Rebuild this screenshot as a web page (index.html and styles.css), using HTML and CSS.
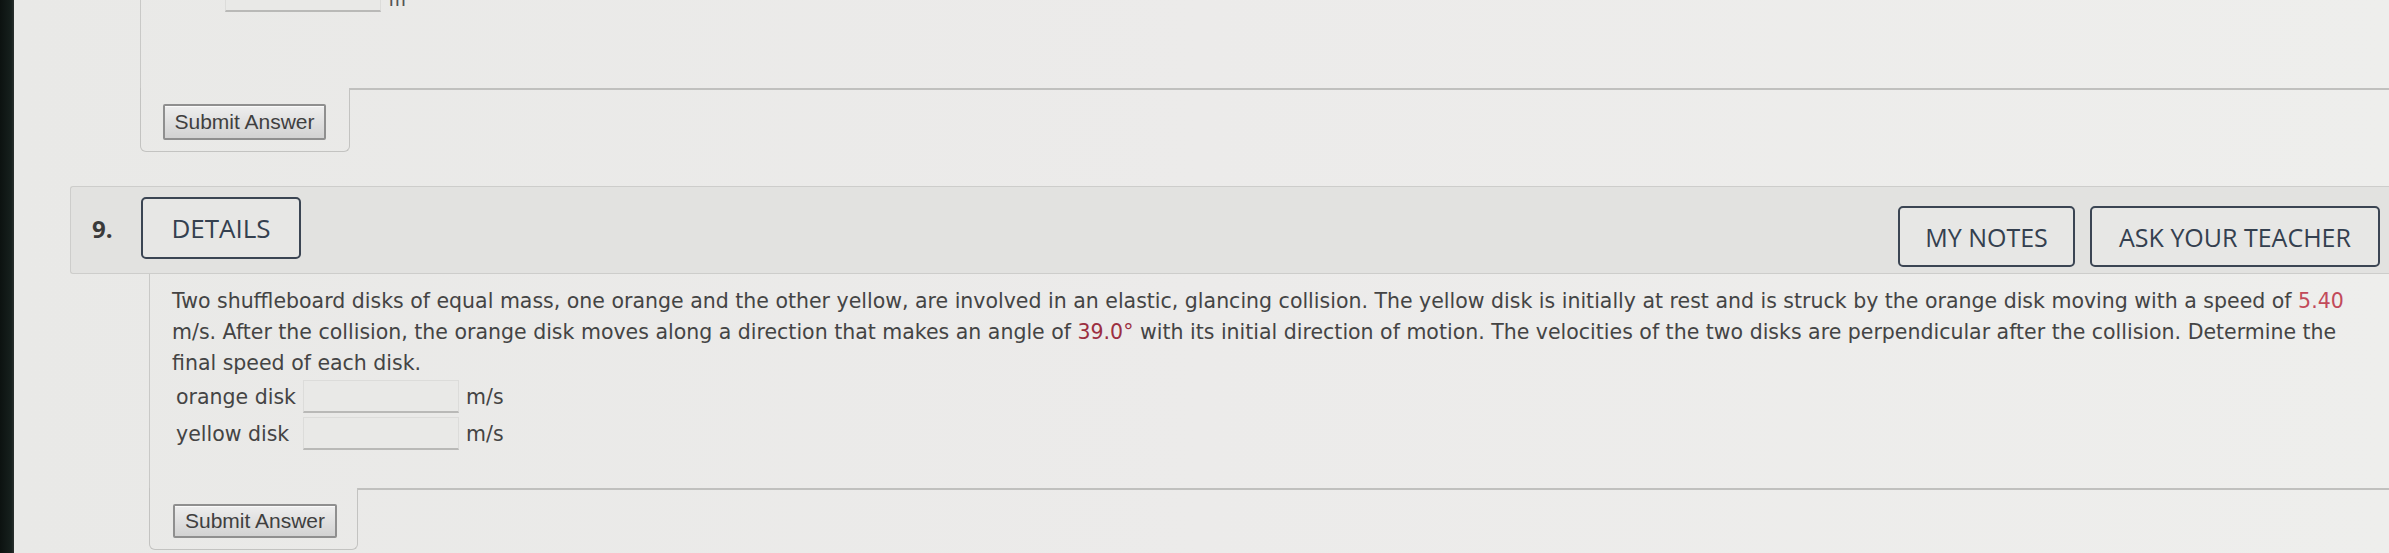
FILE: index.html
```html
<!DOCTYPE html>
<html lang="en">
<head>
<meta charset="utf-8">
<title>Question 9</title>
<link rel="stylesheet" href="styles.css">
</head>
<body>
<div class="screen">
  <div class="bezel"></div>
  <main class="page">
    <section class="prev">
      <div class="prev-body">
        <div class="prev-row">
          <span class="field field-cut"></span>
          <span class="unit-cut">m</span>
        </div>
      </div>
      <div class="q-footer">
        <div class="tab tab-prev"><button class="submit">Submit Answer</button></div>
        <div class="filler"></div>
      </div>
    </section>

    <section class="question">
      <header class="q-head">
        <span class="q-num">9.</span>
        <button class="outline-btn details">DETAILS</button>
        <div class="head-actions">
          <button class="outline-btn">MY NOTES</button>
          <button class="outline-btn">ASK YOUR TEACHER</button>
        </div>
      </header>
      <div class="q-main">
        <div class="q-body">
          <p class="q-text">Two shuffleboard disks of equal mass, one orange and the other yellow, are involved in an elastic, glancing collision. The yellow disk is initially at rest and is struck by the orange disk moving with a speed of <span class="num">5.40</span> m/s. After the collision, the orange disk moves along a direction that makes an angle of <span class="num num-dark">39.0°</span> with its initial direction of motion. The velocities of the two disks are perpendicular after the collision. Determine the final speed of each disk.</p>
          <div class="answers">
            <div class="ans-row">
              <span class="ans-label">orange disk</span>
              <span class="field"></span>
              <span class="unit">m/s</span>
            </div>
            <div class="ans-row">
              <span class="ans-label">yellow disk</span>
              <span class="field"></span>
              <span class="unit">m/s</span>
            </div>
          </div>
        </div>
        <div class="q-footer">
          <div class="tab tab-cur"><button class="submit">Submit Answer</button></div>
          <div class="filler"></div>
        </div>
      </div>
    </section>
  </main>
</div>
</body>
</html>
```
FILE: styles.css
```css
html, body {
  margin: 0;
  padding: 0;
  height: 100%;
  overflow: hidden;
  background: #ebebe9;
}

.screen {
  display: flex;
  height: 553px;
}

.bezel {
  width: 14px;
  flex: none;
  background: linear-gradient(90deg, #0c1210 0%, #16201d 80%, #2a302e 100%);
}

.page {
  flex: 1;
  display: flex;
  flex-direction: column;
  background: linear-gradient(90deg, #e9e9e7 0%, #ecebea 50%, #eeeeec 100%);
  overflow: hidden;
}

/* ---------- previous question (cut off at top) ---------- */
.prev {
  margin-left: 126px;
}

.prev-body {
  display: flow-root;
  height: 88px;
  border-left: 1px solid #c9c9c7;
}

.prev-row {
  display: flex;
  align-items: flex-end;
  margin-left: 84px;
  margin-top: -22px;
  height: 34px;
}

.field {
  display: block;
  width: 156px;
  height: 33px;
  box-sizing: border-box;
  background: #e9e9e7;
  border: 1px solid #dcdcda;
  border-bottom: 2px solid #b9b9b7;
}

.field-cut {
  width: 156px;
  height: 34px;
}

.unit-cut {
  margin-left: 8px;
  margin-bottom: 3px;
  font-family: "Liberation Sans", Arial, sans-serif;
  font-size: 20px;
  line-height: 20px;
  color: #555;
}

/* footer with hanging tab */
.q-footer {
  display: flex;
  align-items: flex-start;
}

.tab {
  box-sizing: border-box;
  border: 1px solid #c3c3c1;
  border-top: none;
  border-radius: 0 0 6px 6px;
}

.tab-prev {
  width: 210px;
  height: 64px;
  padding: 16px 0 0 22px;
}

.tab-cur {
  width: 209px;
  height: 62px;
  padding: 16px 0 0 23px;
}

.filler {
  flex: 1;
  border-top: 2px solid #c0c0be;
}

.submit {
  display: block;
  box-sizing: border-box;
  height: 36px;
  padding: 0 8px;
  font-family: "Liberation Sans", Arial, sans-serif;
  font-size: 21px;
  color: #3f3f3f;
  background: linear-gradient(#eeeeee, #d2d2d2);
  border: 2px solid #8f8f8f;
  border-radius: 2px;
  box-shadow: inset 0 1px 0 #fafafa;
}

.tab-prev .submit { width: 163px; }
.tab-cur .submit { width: 164px; height: 34px; }

/* ---------- question 9 ---------- */
.question {
  margin-top: 34px;
  margin-left: 56px;
}

.q-head {
  display: flex;
  align-items: flex-start;
  box-sizing: border-box;
  height: 88px;
  padding: 10px 9px 0 21px;
  background: #e2e2e0;
  border: 1px solid #cdcdcb;
  border-right: none;
  border-radius: 3px 0 0 3px;
}

.q-num {
  width: 49px;
  margin-top: 15px;
  font-family: "Open Sans", "DejaVu Sans", sans-serif;
  font-weight: 700;
  font-size: 24px;
  color: #3a3a3a;
}

.outline-btn {
  box-sizing: border-box;
  height: 61px;
  padding: 0;
  font-family: "Open Sans", "DejaVu Sans", sans-serif;
  font-size: 25px;
  font-weight: 500;
  color: #34404f;
  background: #e7e7e5;
  border: 2px solid #3b4553;
  border-radius: 5px;
}

.details {
  width: 160px;
  height: 62px;
  font-size: 26px;
}

.head-actions {
  margin-left: auto;
  margin-top: 9px;
  display: flex;
  gap: 15px;
}

.head-actions .outline-btn:first-child { width: 177px; }
.head-actions .outline-btn:last-child { width: 290px; }

.q-main {
  margin-left: 79px;
}

.q-body {
  border-left: 1px solid #c9c9c7;
  padding: 12px 24px 38px 22px;
}

.q-text {
  margin: 0;
  font-family: "DejaVu Sans", sans-serif;
  font-size: 20.5px;
  line-height: 31px;
  color: #444444;
}

.num { color: #c24a5a; }
.num-dark { color: #9c2f40; }

.answers {
  display: flex;
  flex-direction: column;
  gap: 4px;
  margin-top: 1px;
  padding-left: 4px;
}

.ans-row {
  display: flex;
  align-items: center;
  font-family: "DejaVu Sans", sans-serif;
  font-size: 20.5px;
  color: #444444;
}

.ans-label {
  width: 127px;
  flex: none;
}

.unit {
  margin-left: 7px;
}
```
